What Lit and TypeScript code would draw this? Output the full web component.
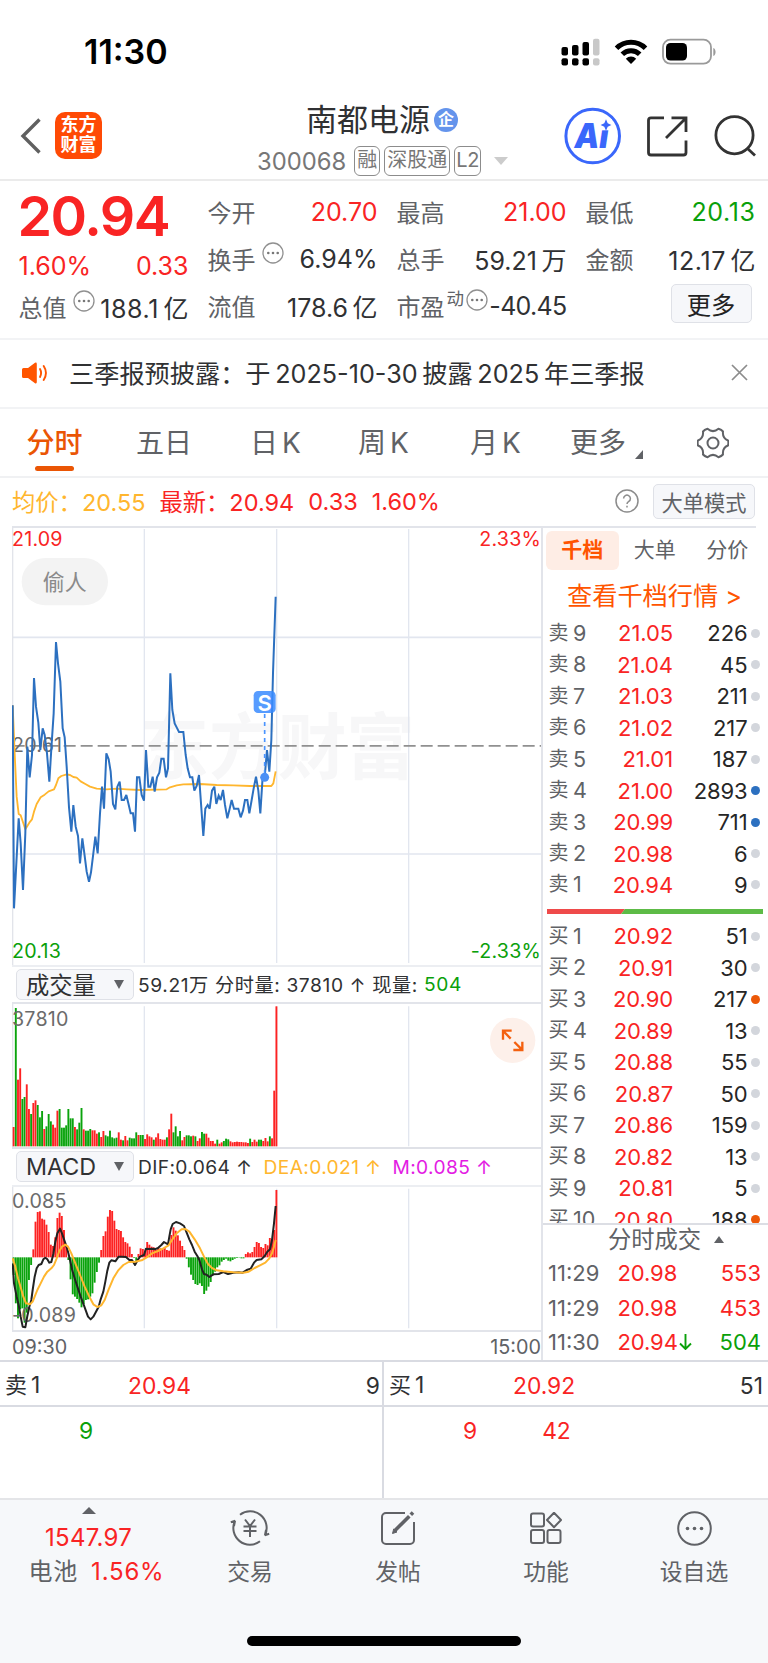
import { LitElement, html, svg, css } from "lit";
import { customElement, property } from "lit/decorators.js";
import { classMap } from "lit/directives/class-map.js";

const FONT = css`Inter, "Noto Sans CJK SC", sans-serif`;

const base = css`
  :host { display: block; font-family: ${FONT}; color: #303133; }
  * { box-sizing: border-box; }
  svg { display: block; flex: none; }
  .red { color: #f92424; }
  .green { color: #0aa00a; }
`;

const PRICE = "38,556 42,1165 56,895 62,970 69,1110 76,940 82,680 89,772 96,705 102,474 108,560 115,608 121,690 128,625 134,645 141,700 148,785 155,670 161,580 168,366 174,430 181,485 188,625 194,652 200,740 207,862 214,935 220,855 227,920 234,948 240,1030 247,955 253,1000 260,1055 267,1085 273,1057 280,1000 286,950 293,1000 300,880 306,800 312,866 319,700 326,718 332,755 339,852 346,868 352,800 359,785 365,840 372,840 379,825 385,850 392,880 399,880 405,935 411,772 418,772 425,825 432,842 438,690 445,800 451,800 458,770 464,815 471,772 478,758 484,716 491,716 498,772 504,745 511,460 517,570 524,610 530,622 537,636 550,636 557,705 563,745 570,772 577,772 583,812 590,798 597,765 603,850 610,948 616,866 623,855 629,866 636,812 643,800 649,852 656,827 662,840 669,810 675,855 682,895 689,866 695,840 702,866 715,866 722,892 729,872 735,840 742,840 748,880 755,840 761,805 768,770 775,812 781,880 788,770 795,760 801,690 808,755 814,660 819,460 827,230";
const AVERAGE = "38,556 44,700 50,830 56,882 62,886 76,928 88,908 96,898 102,875 110,852 122,832 134,824 146,814 162,808 168,795 175,775 184,768 200,763 210,765 220,771 230,773 242,784 256,792 270,800 290,806 320,808 350,806 380,808 420,810 500,808 510,802 530,796 550,793 600,792 650,795 700,796 750,798 814,798 820,790 827,754";
const DIF = "38,340 42,400 50,440 56,465 62,500 68,530 76,532 82,498 88,470 94,450 98,420 104,380 110,355 116,345 124,342 130,328 136,323 142,328 148,338 154,336 160,312 166,275 172,250 180,236 186,250 192,268 198,285 204,305 210,330 216,358 224,385 232,410 242,440 254,472 264,500 272,508 280,500 288,485 296,470 302,448 310,425 316,395 322,362 328,338 334,331 346,334 356,320 366,320 378,321 388,330 396,330 405,345 412,332 420,320 432,315 438,296 448,297 460,296 464,298 474,294 484,285 492,276 504,283 508,260 512,238 518,222 528,216 540,220 552,228 560,248 568,268 576,285 584,305 592,318 598,330 606,358 612,372 620,374 628,381 640,373 656,372 670,366 684,372 700,368 716,367 728,368 740,360 752,356 762,338 770,330 784,328 794,318 802,305 810,298 816,270 822,220 827,168";
const DEA = "38,325 46,350 54,385 62,412 70,440 78,460 90,463 98,455 104,440 112,420 122,400 132,380 142,365 154,355 162,345 170,325 178,303 186,290 196,284 204,290 214,310 226,340 240,375 254,410 268,440 280,463 292,471 304,466 314,450 326,418 340,385 354,362 370,345 386,336 405,335 425,331 440,322 456,310 474,303 490,295 506,286 516,270 530,250 545,238 556,237 568,245 584,268 600,295 612,320 624,342 636,354 650,361 670,364 700,367 730,368 746,365 764,354 780,346 796,338 808,325 816,310 822,290 827,270";
const VOLUME = "r500 g143 r358 r324 g416 g410 r372 r446 g461 r428 r420 g434 g471 g452 r506 g498 g461 g483 r493 r502 r451 g446 g502 g502 g495 g446 g474 g474 r500 g507 g487 g443 r507 g511 g511 g506 r510 r510 r520 g516 r530 r512 g525 g528 g511 g531 g534 g532 r516 r538 g540 r527 r540 g532 g534 g534 g516 r524 g524 g524 r536 r522 r528 r531 g538 r531 r519 r536 r538 r538 g531 r507 r460 g516 g498 g528 g512 r540 r530 g525 g525 g528 r526 g528 r542 r534 g515 g520 r520 r532 r542 r542 r550 g538 r550 r546 g542 g535 g537 r543 r546 r545 r544 r545 r545 r546 r546 r548 g535 r545 r538 r544 g538 g538 r542 r533 r543 g528 r534 r391 r138"
  .split(" ").map((s) => ({ up: s[0] === "r", y: Number(s.slice(1)) }));
const MACD = [375, 460, 505, 478, 475, 518, 488, 390, 345, 298, 215, 186, 184, 206, 209, 224, 246, 284, 288, 262, 204, 188, 198, 240, 288, 330, 388, 433, 440, 447, 458, 472, 462, 450, 448, 440, 430, 398, 366, 338, 300, 258, 244, 200, 180, 183, 212, 237, 240, 243, 262, 276, 280, 290, 312, 324, 335, 312, 295, 297, 302, 276, 284, 290, 292, 300, 295, 295, 297, 294, 300, 302, 255, 232, 242, 256, 272, 288, 300, 326, 352, 374, 390, 402, 405, 400, 408, 432, 422, 410, 396, 376, 365, 352, 346, 335, 330, 326, 332, 334, 330, 326, 324, 323, 325, 325, 312, 307, 310, 306, 291, 276, 279, 291, 294, 282, 286, 264, 268, 240, 120];
const STEP = 6.57;
const RED = "#fd2222";
const GREEN = "#0aa30c";

const vgrid = (top: number, bottom: number) =>
  [433, 830, 1226].map((x) => svg`<line x1=${x} x2=${x} y1=${top} y2=${bottom} stroke="#e2e6ef" stroke-width="4"/>`);

const chartText = css`
  :host { height: 100%; }
  text { font-family: ${FONT}; font-size: 59px; dominant-baseline: central; fill: #6b6b6b; letter-spacing: .6px; }
`;

@customElement("price-chart")
class PriceChart extends LitElement {
  static styles = [base, chartText, css`
    .wm { font-size: 216px; font-weight: 700; fill: #f7f7f8; letter-spacing: 0; }
    .up { fill: #f92424; }
    .down { fill: #0aa00a; }
    .s { font-size: 66px; font-weight: 600; fill: #fff; text-anchor: middle; letter-spacing: 0; }
    .pill { font-size: 66px; fill: #8a8a8a; text-anchor: middle; letter-spacing: 0; }
    .end { text-anchor: end; }
  `];
  render() {
    return html`<svg width="529" height="437" viewBox="36 24 1587 1311">
      <text class="wm" x="421" y="680" textLength="824" lengthAdjust="spacingAndGlyphs">东方财富</text>
      ${vgrid(27, 1329)}
      ${[352, 1002].map((y) => svg`<line x1="36" x2="1624" y1=${y} y2=${y} stroke="#e2e6ef" stroke-width="5"/>`)}
      <line x1="38" x2="38" y1="18" y2="1335" stroke="#e2e4ea" stroke-width="4"/>
      <line x1="38" x2="1624" y1="677.5" y2="677.5" stroke="#909090" stroke-width="5" stroke-dasharray="36 15"/>
      <text class="up" x="36" y="57">21.09</text>
      <text class="up end" x="1623" y="57">2.33%</text>
      <text x="36" y="676">20.61</text>
      <text class="down" x="36" y="1293">20.13</text>
      <text class="down end" x="1623" y="1293">-2.33%</text>
      <rect x="65" y="114" width="259" height="142" rx="71" fill="#f3f3f3"/>
      <text class="pill" x="194" y="185">偷人</text>
      <polyline points=${AVERAGE} fill="none" stroke="#ffb62e" stroke-width="5.5" stroke-linejoin="round"/>
      <polyline points=${PRICE} fill="none" stroke="#2c70c0" stroke-width="6" stroke-linejoin="miter" stroke-miterlimit="3"/>
      <line x1="794" x2="794" y1="582" y2="760" stroke="#4a94ff" stroke-width="5" stroke-dasharray="12 12"/>
      <circle cx="794" cy="772" r="13.5" fill="#4a8ff5"/>
      <rect x="761" y="513" width="66" height="66" rx="13" fill="#3a8bff" opacity=".85"/>
      <text class="s" x="794" y="548">S</text>
    </svg>`;
  }
}

@customElement("volume-chart")
class VolumeChart extends LitElement {
  static styles = [base, chartText];
  render() {
    return html`<svg width="529" height="143" viewBox="36 131 1587 429">
      ${vgrid(138, 558)}
      <line x1="38" x2="38" y1="130" y2="562" stroke="#e2e4ea" stroke-width="4"/>
      ${VOLUME.map((b, i) => svg`<rect x=${38 + i * STEP} y=${b.y} width="5.7" height=${558 - b.y} fill=${b.up ? RED : GREEN}/>`)}
      <text x="36" y="175">37810</text>
      <circle cx="1538" cy="240" r="68" fill="#fdf0ea"/>
      <g fill="none" stroke="#f4600f" stroke-width="7">
        <path d="M1509 238V211H1535M1510 212L1532 235"/>
        <path d="M1567 244V269H1540M1566 268L1543 245"/>
      </g>
    </svg>`;
  }
}

@customElement("macd-chart")
class MacdChart extends LitElement {
  static styles = [base, chartText];
  render() {
    return html`<svg width="529" height="143" viewBox="36 111 1587 429">
      ${vgrid(116, 535)}
      <line x1="38" x2="38" y1="108" y2="540" stroke="#e2e4ea" stroke-width="4"/>
      ${MACD.map((y, i) => svg`<rect x=${38 + i * STEP} y=${Math.min(y, 322)} width="5.7" height=${Math.abs(y - 322)} fill=${y < 322 ? RED : GREEN}/>`)}
      <text x="36" y="153">0.085</text>
      <text x="36" y="495">-0.089</text>
      <polyline points=${DIF} fill="none" stroke="#222" stroke-width="6" stroke-linejoin="round"/>
      <polyline points=${DEA} fill="none" stroke="#ffb62e" stroke-width="6" stroke-linejoin="round"/>
    </svg>`;
  }
}

interface Level { label: string; price: string; volume: string; dot?: string; }
const ASKS: Level[] = [
  { label: "卖9", price: "21.05", volume: "226" }, { label: "卖8", price: "21.04", volume: "45" },
  { label: "卖7", price: "21.03", volume: "211" }, { label: "卖6", price: "21.02", volume: "217" },
  { label: "卖5", price: "21.01", volume: "187" }, { label: "卖4", price: "21.00", volume: "2893", dot: "blue" },
  { label: "卖3", price: "20.99", volume: "711", dot: "blue" }, { label: "卖2", price: "20.98", volume: "6" },
  { label: "卖1", price: "20.94", volume: "9" },
];
const BIDS: Level[] = [
  { label: "买1", price: "20.92", volume: "51" }, { label: "买2", price: "20.91", volume: "30" },
  { label: "买3", price: "20.90", volume: "217", dot: "orange" }, { label: "买4", price: "20.89", volume: "13" },
  { label: "买5", price: "20.88", volume: "55" }, { label: "买6", price: "20.87", volume: "50" },
  { label: "买7", price: "20.86", volume: "159" }, { label: "买8", price: "20.82", volume: "13" },
  { label: "买9", price: "20.81", volume: "5" }, { label: "买10", price: "20.80", volume: "188", dot: "orange" },
];

@customElement("order-book")
class OrderBook extends LitElement {
  static styles = [base, css`
    :host { height: 100%; }
    .panel { height: 100%; display: flex; flex-direction: column; }
    .tabs { display: flex; flex: none; height: 39px; margin: 4.5px 0 0 3px; font-size: 21px; line-height: 38px; color: #606266; }
    .tab { width: 72.5px; text-align: center; }
    .tab.on { background: #feede5; border-radius: 6px; color: #ff5500; font-weight: 700; }
    .more { flex: none; height: 47px; margin-top: 1px; line-height: 50px; padding-left: 24px; font-size: 25.2px; color: #ff5500; white-space: pre; }
    .levels { flex: none; height: 605px; overflow: hidden; }
    .row { display: flex; align-items: center; height: 31.47px; padding: 0 8.5px 0 5.5px; font-size: 22px; white-space: nowrap; }
    .label { width: 46px; color: #606266; display: flex; align-items: center; gap: 4.5px; font-size: 21.5px; line-height: 31px; }
    .label .cjk { font-size: 20px; line-height: 29px; }
    .price { width: 78.5px; text-align: right; letter-spacing: -.1px; }
    .vol { flex: 1; text-align: right; color: #262626; letter-spacing: -.1px; }
    .dot { width: 9px; height: 9px; border-radius: 50%; margin-left: 3px; background: #d3d6dc; }
    .blue { background: #2c70c0; }
    .orange { background: #ec5808; }
    .ratio { display: block; margin: 8.5px 0 6.5px 4px; }
    .deals { border-top: 2px solid #dcdee4; height: 136px; }
    .dtitle { display: flex; align-items: center; justify-content: center; gap: 13px; height: 31px; margin-bottom: 1px; font-size: 23.3px; line-height: 29px; color: #606266; padding: 0 0 1px 21px; }
    .deal { display: grid; grid-template-columns: 69.5px 60px 1fr; align-items: center; height: 34.7px; padding: 0 7px 2px 5px; font-size: 22px; color: #606266; }
    .p { display: flex; align-items: center; gap: 1px; letter-spacing: -.1px; }
    .n { text-align: right; }
  `];
  private row(l: Level) {
    return html`<div class="row"><span class="label"><span class="cjk">${l.label[0]}</span><span>${l.label.slice(1)}</span></span>
      <span class="price red">${l.price}</span><span class="vol">${l.volume}</span>
      <i class=${classMap({ dot: true, blue: l.dot === "blue", orange: l.dot === "orange" })}></i></div>`;
  }
  render() {
    return html`<div class="panel">
      <div class="tabs"><span class="tab on">千档</span><span class="tab">大单</span><span class="tab">分价</span></div>
      <div class="more">查看千档行情 &gt;</div>
      <div class="levels">
        ${ASKS.map((l) => this.row(l))}
        <svg class="ratio" width="216" height="5" viewBox="0 0 216 5"><path d="M0 0H78L74 5H0Z" fill="#ef4a4a"/><path d="M78 0H216V5H74Z" fill="#5dbb46"/></svg>
        ${BIDS.map((l) => this.row(l))}
      </div>
      <div class="deals">
        <div class="dtitle">分时成交<svg width="10" height="7"><path d="M5 0L10 7H0Z" fill="#606266"/></svg></div>
        <div class="deal"><span class="time">11:29</span><span class="p red">20.98</span><span class="n red">553</span></div>
        <div class="deal"><span class="time">11:29</span><span class="p red">20.98</span><span class="n red">453</span></div>
        <div class="deal"><span class="time">11:30</span><span class="p red">20.94<svg width="13" height="16" viewBox="0 0 13 16" fill="none" stroke="#0aa00a" stroke-width="1.9"><path d="M6.5 0V15M1 9.5L6.5 15L12 9.5"/></svg></span><span class="n green">504</span></div>
      </div>
    </div>`;
  }
}

@customElement("info-dots")
class InfoDots extends LitElement {
  static styles = css`:host { display: block; } svg { display: block; }`;
  render() {
    return html`<svg width="22" height="22" viewBox="0 0 22 22"><circle cx="11" cy="11" r="10" fill="none" stroke="#909090" stroke-width="1.3"/><g fill="#777"><circle cx="6.3" cy="11" r="1.3"/><circle cx="11" cy="11" r="1.3"/><circle cx="15.7" cy="11" r="1.3"/></g></svg>`;
  }
}

@customElement("nav-item")
class NavItem extends LitElement {
  @property() label = "";
  static styles = [base, css`
    .item { display: flex; flex-direction: column; align-items: center; width: 100%; color: #606266; font-size: 22.8px; line-height: 30px; }
    .icon { height: 36px; margin: 10px 0 11px; display: flex; align-items: center; }
  `];
  render() {
    return html`<div class="item"><span class="icon"><slot></slot></span>${this.label}</div>`;
  }
}

@customElement("app-root")
class AppRoot extends LitElement {
  static styles = [base, css`
    :host { width: 768px; height: 1663px; background: #fff; overflow: hidden; }
    .status { display: flex; align-items: center; height: 92px; padding: 11px 51px 0 84px; font-size: 34px; font-weight: 600; color: #000; }
    .status .grow { flex: 1; }
    .head { display: grid; grid-template-columns: 200px 1fr 204px; height: 89px; border-bottom: 2px solid #ebebeb; }
    .left { display: flex; align-items: center; padding: 0 0 1px 20px; gap: 14px; }
    .left svg { margin-top: 2px; }
    .logo { width: 47px; height: 47px; border-radius: 10px; background: #ff4a05; color: #fff; font-size: 18px; font-weight: 700; line-height: 20px; text-align: center; padding-top: 3.5px; }
    .mid { display: flex; flex-direction: column; align-items: center; }
    .name { display: flex; align-items: center; gap: 4px; height: 46px; padding-top: 5px; margin-top: 2px; font-size: 31px; line-height: 38px; color: #303133; }
    .badge { width: 24px; height: 24px; border-radius: 50%; background: #6494ec; color: #fff; font-size: 16px; font-weight: 700; line-height: 23px; text-align: center; }
    .sub { display: flex; align-items: center; height: 34px; margin-top: 4px; gap: 4px; font-size: 23.8px; color: #777; padding-left: 1px; }
    .code { margin-right: 4px; }
    .tag { border: 1.5px solid #8c8c8c; border-radius: 6px; height: 30px; padding: 0 2px; font-size: 20px; line-height: 26px; }
    .tag.l2 { font-size: 20px; padding: 0 1px; letter-spacing: -.4px; }
    .arr { margin-left: 9px; }
    .right { display: flex; align-items: center; }
    .ai { font-size: 34px; font-weight: 900; font-style: italic; fill: #3a67fb; }
    .quote { display: grid; grid-template-columns: repeat(4, 170px); column-gap: 19px; height: 159px; padding: 7px 0 0 18.5px; border-bottom: 2px solid #f2f3f5; font-size: 25px; }
    .big { height: 54px; display: flex; align-items: center; margin-left: -1px; font-size: 55.5px; font-weight: 600; letter-spacing: -1.5px; }
    .chg { height: 48px; display: flex; align-items: center; justify-content: space-between; }
    .cap { height: 33px; display: flex; align-items: center; white-space: nowrap; }
    .cell { height: 47px; display: flex; align-items: center; white-space: nowrap; }
    .k { color: #606266; font-size: 24px; }
    .v { margin-left: auto; letter-spacing: 0; }
    .v.wide { letter-spacing: .6px; }
    .v.tight { letter-spacing: -.7px; }
    .u { margin-left: 4.5px; letter-spacing: 0; }
    .g { margin: 0 4.7px; }
    .info { margin: -11px 0 0 6px; }
    .sup { font-size: 17.5px; margin: -17px 0 0 2px; color: #606266; }
    .sup + .info { margin-left: 2px; }
    .btn { background: #f6f7fa; border: 1.5px solid #dfe1e7; border-radius: 5px; display: flex; align-items: center; justify-content: center; color: #303133; }
    .btn.more { margin: 0 4px 4px auto; width: 81px; height: 39px; font-size: 24.3px; color: #222; }
    .notice { display: flex; align-items: center; height: 69px; padding: 0 20px 2px 22px; border-bottom: 2px solid #f2f3f5; font-size: 25.2px; }
    .notice .msg { flex: 1; margin: -2px 0 0 21px; white-space: nowrap; }
    .tabs { display: flex; height: 69px; border-bottom: 2px solid #f0f1f3; font-size: 28px; color: #606266; padding-left: 26px; }
    .t { display: flex; flex-direction: column; align-items: flex-start; padding-top: 14px; line-height: 41px; white-space: nowrap; }
    .t.on { color: #ea5504; font-weight: 500; align-items: center; }
    .t.on::after { content: ""; width: 39px; height: 5.5px; border-radius: 3px; background: #ea5504; margin-top: 1.5px; }
    .w1 { width: 57px; margin-right: 53px; } .w2 { width: 114px; } .w3 { width: 108px; } .w4 { width: 112px; } .w5 { width: 100px; } .w6 { width: 127px; }
    .w3, .w4, .w5 { flex-direction: row; gap: 4px; justify-content: flex-start; }
    .w6 span { display: flex; align-items: flex-end; gap: 9px; }
    .w6 svg { margin-bottom: 5px; }
    .gear { margin-top: 18px; }
    .summary { display: flex; align-items: center; gap: 14px; height: 48px; padding: 0 13px 2px 12px; font-size: 23.5px; white-space: nowrap; color: #f92424; }
    .summary .cj { font-size: 23.3px; }
    .avg { color: #ffb62e; }
    .mag { color: #e31be3; }
    .q { margin-left: auto; }
    .btn.mode { width: 102px; height: 35px; font-size: 21.2px; color: #606266; }
    .body { display: grid; grid-template-columns: 529px 1fr; margin-left: 12px; height: 834px; }
    .charts { border-top: 2px solid #e2e4ea; }
    .c1 { height: 437px; }
    .c2 { height: 143px; }
    .book { border-left: 2px solid #e2e4ea; }
    .book::before { content: ""; display: block; width: 213px; height: 2px; background: #e2e4ea; margin-bottom: -2px; }
    .bar { display: flex; align-items: center; height: 39px; border-top: 2px solid #eceef2; border-bottom: 2px solid #e2e4ea; padding: 0 0 1px 4px; font-size: 19.2px; letter-spacing: .6px; color: #303133; white-space: pre; }
    .bar.b2 { height: 40px; border-top-color: #dfe1e7; border-bottom-color: #eceef2; letter-spacing: .38px; }
    .bar .avg { margin: 0 11px; }
    .sel { width: 118px; height: 31px; background: #f6f7fa; border: 1.5px solid #dfe1e7; border-radius: 5px; display: flex; align-items: center; justify-content: space-between; padding: 0 9px; font-size: 23.3px; letter-spacing: 0; margin-right: 4px; }
    .times { display: flex; justify-content: space-between; border-top: 2px solid #e2e4ea; height: 30px; line-height: 30px; font-size: 19.8px; color: #606266; }
    .ord { display: grid; grid-template-columns: 384px 1fr; border-top: 2px solid #d9dbe2; height: 138px; font-size: 22.8px; color: #303133; }
    .side { display: flex; flex-direction: column; }
    .side:first-child { border-right: 2px solid #d9dbe2; }
    .l1 { display: grid; grid-template-columns: 123px 1fr auto; align-items: center; height: 45px; border-bottom: 2px solid #d9dbe2; padding: 3px 2px 0 5px; }
    .side + .side .l1 { padding-right: 5px; grid-template-columns: 124px 1fr auto; }
    .l1 .n { display: flex; gap: 4px; align-items: center; line-height: 32px; }
    .l1 .cj { font-size: 22px; }
    .l2r { display: flex; height: 48px; align-items: center; padding: 0 0 1px 79px; gap: 65px; }
    .foot { height: 165px; background: #f6f8fa; border-top: 2px solid #e4e5e8; display: flex; flex-direction: column; align-items: center; justify-content: space-between; padding-bottom: 17.5px; }
    .nav { display: grid; grid-template-columns: 176px repeat(4, 148px); width: 768px; }
    .idx { display: flex; flex-direction: column; align-items: center; padding: 7px 0 0 1px; font-size: 24px; line-height: 34.5px; white-space: nowrap; }
    .idx .num { line-height: 34px; margin-top: 7px; letter-spacing: .25px; }
    .idx .pct { display: flex; gap: 13px; align-items: center; padding-left: 16px; letter-spacing: .8px; }
    .idx .pct span:first-child { color: #606266; }
    .home { width: 274px; height: 9.5px; border-radius: 5px; background: #000; }
  `];
  render() {
    const down = html`<svg width="10" height="9"><path d="M0 0H10L5 9Z" fill="#606266"/></svg>`;
    return html`
      <div class="status">11:30<span class="grow"></span>
        <svg width="156" height="28" viewBox="561 37 156 28">
          <g fill="#000"><rect x="561.5" y="46" width="6.5" height="8.5" rx="2"/><rect x="572" y="44" width="6.5" height="10.5" rx="2"/><rect x="582.5" y="41" width="6.5" height="13.5" rx="2"/><rect x="561.5" y="57.3" width="6.5" height="7.2" rx="2"/><rect x="572" y="57.3" width="6.5" height="7.2" rx="2"/><rect x="582.5" y="57.3" width="6.5" height="7.2" rx="2"/></g>
          <g fill="#c8c8c8"><rect x="593" y="37.7" width="6.5" height="16.8" rx="2"/><rect x="593" y="57.3" width="6.5" height="7.2" rx="2"/></g>
          <g fill="none" stroke="#000" stroke-width="5"><path d="M616.5 47.3a20.5 20.5 0 0 1 29 0"/><path d="M622.3 53.3a12.3 12.3 0 0 1 17.4 0"/></g>
          <path d="M631 63l-5.2-5.3a7.4 7.4 0 0 1 10.4 0z"/>
          <rect x="663" y="38.7" width="48" height="24" rx="7.5" fill="none" stroke="#9a9a9a" stroke-width="1.8"/><rect x="666" y="42" width="21" height="17.6" rx="4.5"/><path d="M713.3 47v8c3-1 3-7 0-8z" fill="#9a9a9a"/>
        </svg>
      </div>
      <div class="head">
        <div class="left">
          <svg width="21" height="36" viewBox="0 0 21 36" fill="none" stroke="#606060" stroke-width="3.4"><path d="M19.5 1.5L3 18L19.5 34.5"/></svg>
          <div class="logo">东方<br>财富</div>
        </div>
        <div class="mid">
          <div class="name">南都电源<span class="badge">企</span></div>
          <div class="sub"><span class="code">300068</span><span class="tag">融</span><span class="tag">深股通</span><span class="tag l2">L2</span>
            <svg class="arr" width="14" height="8"><path d="M0 0H14L7 8Z" fill="#ccc"/></svg></div>
        </div>
        <div class="right">
          <svg width="204" height="60" viewBox="564 106 204 60">
            <circle cx="592.7" cy="136" r="26.8" fill="none" stroke="#3a67fb" stroke-width="3"/>
            <text class="ai" x="574.5" y="147.500" textLength="34" lengthAdjust="spacingAndGlyphs">Ai</text>
            <path d="M599.500 119H612V130.300H599.500Z" fill="#fff"/>
            <path d="M606 119.300L607.700 123.300L611.400 125L607.700 126.700L606 130.700L604.300 126.700L600.600 125L604.300 123.300Z" fill="#3a67fb"/>
            <g fill="none" stroke="#333" stroke-width="2.8"><path d="M664 117.800H651a2.500 2.500 0 0 0-2.500 2.500V152.500a2.500 2.500 0 0 0 2.500 2.500H683.500a2.500 2.500 0 0 0 2.500-2.500V140.500"/><path d="M671.500 117.800H686V132M686 118L666 138"/><circle cx="734.500" cy="135.200" r="18.600"/><path d="M747.500 148.500L755 155.500"/></g>
          </svg>
        </div>
      </div>
      <div class="quote">
        <div>
          <div class="big red">20.94</div>
          <div class="chg red"><span>1.60%</span><span>0.33</span></div>
          <div class="cap"><span class="k">总值</span><info-dots class="info"></info-dots><span class="v wide">188.1<span class="u">亿</span></span></div>
        </div>
        <div>
          <div class="cell"><span class="k">今开</span><span class="v red">20.70</span></div>
          <div class="cell"><span class="k">换手</span><info-dots class="info"></info-dots><span class="v">6.94%</span></div>
          <div class="cell"><span class="k">流值</span><span class="v">178.6<span class="u">亿</span></span></div>
        </div>
        <div>
          <div class="cell"><span class="k">最高</span><span class="v red">21.00</span></div>
          <div class="cell"><span class="k">总手</span><span class="v">59.21<span class="u">万</span></span></div>
          <div class="cell"><span class="k">市盈</span><span class="sup">动</span><info-dots class="info"></info-dots><span class="v tight">-40.45</span></div>
        </div>
        <div>
          <div class="cell"><span class="k">最低</span><span class="v wide green">20.13</span></div>
          <div class="cell"><span class="k">金额</span><span class="v wide">12.17<span class="u">亿</span></span></div>
          <div class="cell"><span class="btn more">更多</span></div>
        </div>
      </div>
      <div class="notice">
        <svg width="26" height="22" viewBox="0 0 26 22"><path d="M0 7.500Q0 6 1.500 6H6L13 .8Q14.800 0 14.800 2V20Q14.800 22 13 21.200L6 16H1.500Q0 16 0 14.500Z" fill="#ff5500"/><g fill="none" stroke="#ff5500" stroke-width="1.900" stroke-linecap="round"><path d="M18 7Q20.200 11 18 15"/><path d="M21.700 4Q26.200 11 21.700 18"/></g></svg>
        <span class="msg">三季报预披露：于<span class="g">2025-10-30</span>披露<span class="g">2025</span>年三季报</span>
        <svg width="17" height="17" viewBox="0 0 17 17" stroke="#8c8c8c" stroke-width="1.700"><path d="M1 1L16 16M16 1L1 16"/></svg>
      </div>
      <div class="tabs">
        <span class="t on w1">分时</span><span class="t w2">五日</span><span class="t w3"><span>日</span><span>K</span></span><span class="t w4"><span>周</span><span>K</span></span><span class="t w5"><span>月</span><span>K</span></span>
        <span class="t w6"><span>更多<svg width="8" height="9"><path d="M8 0V9H0Z" fill="#606266"/></svg></span></span>
        <svg class="gear" width="32" height="32" viewBox="-16 -16 32 32" fill="none" stroke="#606266" stroke-width="2"><path d="M-5.500 -14.200Q0 -9.500 5.500 -14.200Q8.500 -13.200 10 -11.500Q9.200 -4.800 15 -2.500Q15.800 0 15 2.500Q9.200 4.800 10 11.500Q8.500 13.200 5.500 14.200Q0 9.500 -5.500 14.200Q-8.500 13.200 -10 11.500Q-9.200 4.800 -15 2.500Q-15.800 0 -15 -2.500Q-9.200 -4.800 -10 -11.500Q-8.500 -13.200 -5.500 -14.200Z" stroke-linejoin="round"/><circle r="5.500"/></svg>
      </div>
      <div class="summary">
        <span class="avg"><span class="cj">均价：</span>20.55</span>
        <span><span class="cj">最新：</span>20.94</span>
        <span>0.33</span><span>1.60%</span>
        <svg class="q" width="24" height="24" viewBox="0 0 24 24" fill="none" stroke="#8c8c8c" stroke-width="1.500"><circle cx="12" cy="12" r="11"/><path d="M8.600 9.500a3.400 3.400 0 1 1 5.200 2.900c-1.300.8-1.800 1.300-1.800 2.700M12 16.800v1.700"/></svg>
        <span class="btn mode">大单模式</span>
      </div>
      <div class="body">
        <div class="charts">
          <price-chart class="c1"></price-chart>
          <div class="bar"><span class="sel">成交量${down}</span>59.21万 分时量: 37810 ↑ 现量: <span class="green">504</span></div>
          <volume-chart class="c2"></volume-chart>
          <div class="bar b2"><span class="sel">MACD${down}</span><span>DIF:0.064 ↑</span><span class="avg">DEA:0.021 ↑</span><span class="mag">M:0.085 ↑</span></div>
          <macd-chart class="c2"></macd-chart>
          <div class="times"><span>09:30</span><span>15:00</span></div>
        </div>
        <div class="book"><order-book></order-book></div>
      </div>
      <div class="ord">
        <div class="side">
          <div class="l1"><span class="n"><span class="cj">卖</span><span>1</span></span><span class="red">20.94</span><span>9</span></div>
          <div class="l2r green"><span>9</span></div>
        </div>
        <div class="side">
          <div class="l1"><span class="n"><span class="cj">买</span><span>1</span></span><span class="red">20.92</span><span>51</span></div>
          <div class="l2r red"><span>9</span><span>42</span></div>
        </div>
      </div>
      <div class="foot">
        <div class="nav">
          <div class="idx red"><svg width="14" height="7"><path d="M7 0L14 7H0Z" fill="#606266"/></svg><span class="num">1547.97</span><span class="pct"><span>电池</span><span>1.56%</span></span></div>
          <nav-item label="交易"><svg width="40" height="36" viewBox="-20 -18 40 36" fill="none" stroke="#606266" stroke-width="2"><path d="M-10 -13.300A16.600 16.600 0 0 1 15.200 6.700M14.800 7.200L19.200 5.800M14.900 7.500L16 2"/><path d="M10 13.300A16.600 16.600 0 0 1 -15.200 -6.700M-14.800 -7.200L-19.200 -5.800M-14.900 -7.500L-16 -2"/><path d="M-5 -8.500L0 -2L5 -8.500M0 -2V9M-6.500 -1.500H6.500M-6.500 3H6.500"/></svg></nav-item>
          <nav-item label="发帖"><svg width="34" height="34" viewBox="0 0 34 34" fill="none" stroke="#606266" stroke-width="2"><path d="M24 2H5a4 4 0 0 0-4 4V29a4 4 0 0 0 4 4H29a4 4 0 0 0 4-4V11"/><path d="M14 19.500L28.300 5.200" stroke-width="3.600"/><path d="M11.500 22.500L12.700 18L16 21Z" fill="#606266" stroke-width="1"/><path d="M29.800 3.800L32 1.600" stroke-width="3.600"/></svg></nav-item>
          <nav-item label="功能"><svg width="32" height="32" viewBox="0 0 32 32" fill="none" stroke="#606266" stroke-width="2"><rect x="1" y="1.500" width="13" height="13" rx="2"/><rect x="1" y="18" width="13" height="13" rx="2"/><rect x="17.500" y="18" width="13" height="13" rx="2"/><path d="M24 .8L31 8L24 15.200L17 8Z" stroke-linejoin="round"/></svg></nav-item>
          <nav-item label="设自选"><svg width="35" height="35" viewBox="0 0 35 35"><circle cx="17.500" cy="17.500" r="16.300" fill="none" stroke="#606266" stroke-width="2"/><g fill="#606266"><circle cx="10.500" cy="17.500" r="1.800"/><circle cx="17.500" cy="17.500" r="1.800"/><circle cx="24.500" cy="17.500" r="1.800"/></g></svg></nav-item>
        </div>
        <div class="home"></div>
      </div>
    `;
  }
}
